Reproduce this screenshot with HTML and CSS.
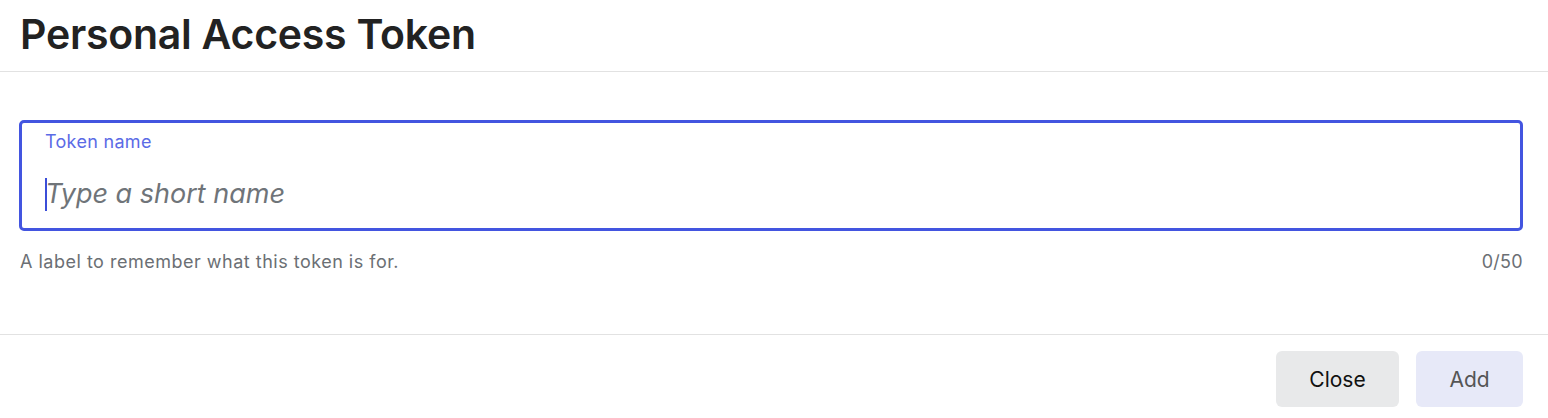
FILE: index.html
```html
<!DOCTYPE html>
<html>
<head>
<meta charset="utf-8">
<link rel="stylesheet" href="styles.css">
</head>
<body>
<div class="dialog">
  <header class="dialog-header">
    <h1 class="dialog-title">Personal Access Token</h1>
  </header>
  <section class="dialog-body">
    <div class="field">
      <label class="field-label">Token name</label>
      <div class="field-input"><span class="caret"></span><span class="placeholder">Type a short name</span></div>
    </div>
    <div class="field-meta">
      <span class="hint">A label to remember what this token is for.</span>
      <span class="count">0/50</span>
    </div>
  </section>
  <footer class="dialog-footer">
    <button class="btn btn-secondary">Close</button>
    <button class="btn btn-primary">Add</button>
  </footer>
</div>
</body>
</html>
```
FILE: styles.css
```css
html, body {
  margin: 0;
  padding: 0;
  background: #ffffff;
  font-family: Inter, "Noto Sans", sans-serif;
}
.dialog {
  width: 1548px;
}
.dialog-header {
  height: 72px;
  border-bottom: 1px solid #e2e2e2;
  padding: 0 20px;
  box-sizing: border-box;
  display: flex;
  align-items: center;
}
.dialog-title {
  margin: 0;
  font-size: 41px;
  font-weight: 600;
  color: #222222;
  letter-spacing: -0.25px;
  line-height: 1;
  padding-bottom: 3px;
}
.dialog-body {
  padding: 48px 25px 0 19px;
  height: 263px;
  box-sizing: border-box;
  border-bottom: 1px solid #e2e2e2;
}
.field {
  border: 3px solid #4355e0;
  border-radius: 5px;
  height: 111px;
  box-sizing: border-box;
  padding: 7px 0 0 23px;
}
.field-label {
  display: block;
  font-size: 18px;
  letter-spacing: 0.3px;
  color: #5b6be6;
  line-height: 24px;
}
.field-input {
  display: flex;
  align-items: center;
  margin-top: 23px;
  height: 34px;
}
.caret {
  width: 2px;
  height: 33px;
  background: #3b4ed8;
}
.placeholder {
  font-size: 27px;
  font-style: italic;
  color: #6f7479;
  line-height: 34px;
  margin-left: -2px;
}
.field-meta {
  display: flex;
  justify-content: space-between;
  padding: 19px 0 0 1px;
  font-size: 18px;
  letter-spacing: 0.5px;
  color: #6b6f74;
  line-height: 24px;
}
.count {
  letter-spacing: 0.3px;
}
.dialog-footer {
  display: flex;
  justify-content: flex-end;
  gap: 17px;
  padding: 16px 25px 0 0;
}
.btn {
  border: none;
  border-radius: 6px;
  height: 56px;
  font-family: Inter, "Noto Sans", sans-serif;
  font-size: 21px;
  padding: 0;
}
.btn-secondary {
  width: 123px;
  background: #e8e9ea;
  color: #111;
}
.btn-primary {
  width: 107px;
  background: #e7e9f8;
  color: #555;
}
```
